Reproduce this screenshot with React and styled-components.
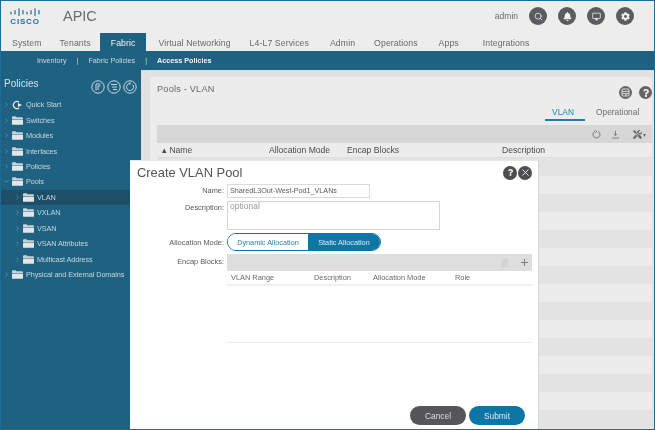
import React from 'react';
import styled, { createGlobalStyle } from 'styled-components';
import { FiChevronRight, FiChevronDown, FiSearch, FiPlus, FiX } from 'react-icons/fi';
import { FaBell, FaCog, FaQuestion, FaTools, FaTrashAlt } from 'react-icons/fa';
import { MdOutlineDesktopWindows } from 'react-icons/md';

const Global = createGlobalStyle`
  html, body { margin: 0; padding: 0; background: #fff; }
  * { box-sizing: border-box; }
`;

// the reference is a soft, upscaled capture, hence the slight blur
const Page = styled.div`
  position: relative;
  width: 655px;
  height: 430px;
  overflow: hidden;
  display: flex;
  flex-direction: column;
  border: 1px solid #1b6c9b;
  background: #ececec;
  color: #58585a;
  font-family: "Liberation Sans", Arial, sans-serif;
  filter: blur(0.3px);
`;

const Header = styled.header`
  height: 32px;
  flex: none;
  display: flex;
  align-items: center;
  padding: 0 20px 2px 8px;
  background: #ededed;
`;

const Logo = styled.div`
  width: 32px;
  display: flex;
  flex-direction: column;
  align-items: center;
  gap: 2px;
  color: #1f6f98;
`;

const LogoWord = styled.span`
  font-size: 8px;
  line-height: 7px;
  font-weight: 700;
  letter-spacing: 0.8px;
`;

const AppName = styled.div`
  margin-left: 22px;
  font-size: 14.5px;
  color: #6c6c6e;
`;

const User = styled.div`
  margin-left: auto;
  margin-right: 11px;
  font-size: 8.5px;
  color: #6a6a6a;
`;

const HeaderIcons = styled.div`
  display: flex;
  gap: 11px;
`;

const RoundIcon = styled.div`
  width: ${p => p.$size || 18}px;
  height: ${p => p.$size || 18}px;
  border-radius: 50%;
  display: flex;
  align-items: center;
  justify-content: center;
  background: ${p => p.$bg || '#5c5c5e'};
  color: #f0f0f0;
  font-size: ${p => p.$font || 9}px;
`;

const Tabs = styled.nav`
  height: 18px;
  flex: none;
  display: flex;
  padding-left: 2px;
  background: #ededed;
`;

const Tab = styled.div`
  margin-left: ${p => p.$ml || 0}px;
  padding: 3px ${p => (p.$active ? 11 : 9)}px 0;
  font-size: 8.7px;
  line-height: 14px;
  letter-spacing: 0.1px;
  white-space: nowrap;
  color: ${p => (p.$active ? '#f2f2f2' : '#68686a')};
  background: ${p => (p.$active ? '#1f6181' : 'transparent')};
`;

const SubNav = styled.div`
  height: 19px;
  flex: none;
  display: flex;
  align-items: center;
  padding-left: 36px;
  gap: 10px;
  font-size: 7.2px;
  color: #c9d8e0;
  background: #1f6181;
`;

const SubLink = styled.span`
  font-weight: ${p => (p.$active ? 700 : 400)};
  color: ${p => (p.$active ? '#f4f7f9' : '#c9d8e0')};
`;

const Body = styled.div`
  flex: 1;
  min-height: 0;
  display: flex;
`;

const Sidebar = styled.aside`
  width: 140px;
  flex: none;
  background: #1f6181;
  color: #c5d5dd;
`;

const SideHead = styled.div`
  height: 27px;
  display: flex;
  align-items: center;
  justify-content: space-between;
  padding: 0 4px 0 3px;
  font-size: 10px;
  color: #d4e0e6;
`;

const SideTools = styled.div`
  display: flex;
  gap: 2px;
  margin-top: 7px;
`;

const Row = styled.div`
  height: 15.45px;
  display: flex;
  align-items: center;
  padding-left: ${p => (p.$nested ? 14 : 3)}px;
  gap: 3px;
  font-size: 7.3px;
  letter-spacing: -0.09px;
  white-space: nowrap;
  background: ${p => (p.$active ? '#1d4f69' : 'transparent')};
  svg { flex: none; }
`;

const Chevron = styled.span`
  width: 5px;
  display: flex;
  justify-content: center;
  font-size: 7px;
  color: #7ea3b5;
`;

const Main = styled.main`
  flex: 1;
  min-width: 0;
  padding: 6px 2px 0 9px;
  background: #e1e1e1;
  border-top: 1px solid #dcdcdc;
`;

const Panel = styled.section`
  height: 100%;
  padding: 0 0 0 7px;
  background: #ececec;
`;

const PanelHead = styled.div`
  height: 29px;
  display: flex;
  align-items: center;
  justify-content: space-between;
`;

const PanelTitle = styled.div`
  padding-bottom: 5px;
  font-size: 9.2px;
  letter-spacing: 0.2px;
  color: #69696b;
`;

const PanelTools = styled.div`
  display: flex;
  gap: 7px;
  margin-top: 2px;
`;

const ViewTabs = styled.div`
  height: 13px;
  display: flex;
  justify-content: flex-end;
  margin-right: 13px;
  gap: 11px;
  font-size: 8.4px;
`;

const ViewTab = styled.div`
  width: ${p => p.$w}px;
  padding-right: ${p => (p.$active ? 4 : 0)}px;
  text-align: center;
  height: 15px;
  line-height: 13px;
  white-space: nowrap;
  color: ${p => (p.$active ? '#1e7ea8' : '#6d6d6f')};
  border-bottom: 2px solid ${p => (p.$active ? '#1e7ea8' : 'transparent')};
`;

const GridBar = styled.div`
  height: 18px;
  margin-top: 6px;
  display: flex;
  align-items: center;
  justify-content: flex-end;
  padding-right: 6px;
  background: #d7d7d7;
  color: #6e6e72;
  font-size: 9px;
`;

const GridTool = styled.span`
  display: flex;
  align-items: center;
  margin-left: ${p => p.$ml || 0}px;
`;

const Caret = styled.span`
  font-size: 6px;
  margin-left: 1px;
`;

const GridHead = styled.div`
  height: 15px;
  display: grid;
  grid-template-columns: 107px 78px 155px 1fr;
  align-items: center;
  padding-left: 5px;
  font-size: 8.6px;
  color: #4c4c4e;
  border-bottom: 1px solid #dedede;
`;

const GridRow = styled.div`
  height: 18px;
  background: ${p => (p.$dark ? '#e3e3e3' : '#ececec')};
`;

const Dialog = styled.div`
  position: absolute;
  left: 129px;
  top: 159px;
  width: 409px;
  height: 270px;
  padding: 0 6px 0 7px;
  display: flex;
  flex-direction: column;
  background: #fff;
  border-right: 1px solid #d6d6d6;
  border-top: 1px solid #e6e6e6;
`;

const DialogHead = styled.div`
  height: 23px;
  flex: none;
  display: flex;
  align-items: center;
  justify-content: space-between;
`;

const DialogTitle = styled.h2`
  margin: 0;
  font-size: 12.9px;
  font-weight: 400;
  color: #545456;
`;

const DialogTools = styled.div`
  display: flex;
  gap: 1px;
`;

const Form = styled.div`
  display: grid;
  grid-template-columns: 87px 1fr;
  column-gap: 3px;
  align-content: start;
`;

const Label = styled.label`
  text-align: right;
  font-size: 7.4px;
  line-height: 12px;
  color: #58585a;
  padding-top: ${p => p.$top || 1}px;
`;

const Field = styled.div`
  margin-bottom: ${p => p.$gap ?? 3}px;
`;

const NameInput = styled.div`
  width: 143px;
  height: 14px;
  padding-left: 2px;
  font-size: 7.2px;
  line-height: 12px;
  color: #5a5a5c;
  border: 1px solid #dadada;
`;

const TextArea = styled.div`
  width: 213px;
  height: 29px;
  padding-left: 2px;
  font-size: 8.5px;
  line-height: 9px;
  color: #9a9a9c;
  border: 1px solid #d6d6d6;
`;

const Toggle = styled.div`
  display: flex;
  width: 154px;
  height: 18px;
  border-radius: 9px;
  overflow: hidden;
  border: 1px solid #0f75a5;
  font-size: 7.3px;
`;

const ToggleOption = styled.div`
  flex: ${p => p.$flex};
  display: flex;
  align-items: center;
  justify-content: center;
  color: ${p => (p.$on ? '#dcecf4' : '#2a82ab')};
  background: ${p => (p.$on ? '#0f75a5' : '#fff')};
`;

const BlockBar = styled.div`
  height: 17px;
  width: 305px;
  display: flex;
  align-items: center;
  justify-content: flex-end;
  gap: 10px;
  padding-right: 2px;
  background: #dedede;
  font-size: 11px;
  color: #77777a;
`;

const Trash = styled(FaTrashAlt)`
  font-size: 8px;
  color: #cfcfcf;
`;

const BlockHead = styled.div`
  width: 305px;
  height: 15px;
  display: grid;
  grid-template-columns: 83px 59px 82px 1fr;
  align-items: center;
  padding-left: 4px;
  font-size: 7.4px;
  color: #69696b;
  border-bottom: 2px solid #efefef;
`;

const BlockBody = styled.div`
  width: 305px;
  height: 57px;
  border-bottom: 1px solid #ececec;
`;

const Footer = styled.div`
  margin-top: auto;
  height: 22px;
  margin-bottom: 2px;
  display: flex;
  justify-content: flex-end;
  gap: 3px;
  padding-right: 7px;
`;

const Button = styled.div`
  width: 56px;
  height: 19px;
  border-radius: 10px;
  display: flex;
  align-items: center;
  justify-content: center;
  font-size: 8.4px;
  color: ${p => (p.$primary ? '#d8e9f2' : '#dcdcdc')};
  background: ${p => (p.$primary ? '#0f75a5' : '#565658')};
`;

const CiscoBars = () => (
  <svg width="31" height="8" viewBox="0 0 31 8" fill="none" stroke="currentColor" strokeWidth="1.2" strokeLinecap="round">
    {[[1, 4, 6], [5, 2.5, 6], [9, 0.8, 7.4], [13, 2.5, 6], [17, 4, 6], [21, 2.5, 6], [25, 0.8, 7.4], [29, 2.5, 6]].map(([x, y1, y2]) => (
      <line key={x} x1={x} x2={x} y1={y1} y2={y2} />
    ))}
  </svg>
);

const SideGlyph = ({ d }) => (
  <svg width="14" height="14" viewBox="0 0 14 14" fill="none" stroke="#dfe7eb" strokeWidth="0.9">
    <circle cx="7" cy="7" r="6.2" />
    <path d={d} />
  </svg>
);

const QuickIcon = () => (
  <svg width="11" height="10" viewBox="0 0 11 10" fill="none" stroke="#eef1f3" strokeWidth="1.2">
    <path d="M7 2 A3.6 3.6 0 1 0 7 8" />
    <path d="M6 3 L10 5 L6 7 Z" fill="#eef1f3" stroke="none" />
  </svg>
);

// the tree folders have a light lip, a dark seam and a light body
const FolderIcon = () => (
  <svg width="11" height="9" viewBox="0 0 11 9">
    <path d="M0 1.2C0 .6.4.3 1 .3h2.6l.9 1H10c.6 0 1 .3 1 .9V3H0z" fill="#c9d2d7" />
    <rect y="3.6" width="11" height="5.2" rx="0.6" fill="#e3e6e8" />
  </svg>
);

const PanelGlyph = () => (
  <svg width="9" height="9" viewBox="0 0 9 9" fill="none" stroke="#e8e8e8" strokeWidth="0.9">
    <rect x="1" y="1" width="7" height="7" rx="1" />
    <path d="M1 3.4h7M1 5.6h7M5 5.6V8" />
  </svg>
);

const RefreshIcon = () => (
  <svg width="9" height="9" viewBox="0 0 9 9" fill="none" stroke="currentColor" strokeWidth="0.9">
    <path d="M6.2 1.4A3.5 3.5 0 1 1 2.8 1.4" />
    <path d="M3.4 0.4l1.4 1.2-1.4 .9" />
  </svg>
);

const DownloadIcon = () => (
  <svg width="9" height="9" viewBox="0 0 9 9" fill="none" stroke="currentColor" strokeWidth="0.8">
    <path d="M4.5 .8v4.6M2.8 3.9l1.7 1.6 1.7-1.6M.8 8h7.4" />
  </svg>
);

const tabs = [
  { name: 'System' },
  { name: 'Tenants' },
  { name: 'Fabric', active: true },
  { name: 'Virtual Networking', ml: 3 },
  { name: 'L4-L7 Services', ml: 1 },
  { name: 'Admin', ml: 3 },
  { name: 'Operations', ml: 1 },
  { name: 'Apps', ml: 3 },
  { name: 'Integrations', ml: 6 },
];

const tree = [
  { name: 'Quick Start', quick: true },
  { name: 'Switches' },
  { name: 'Modules' },
  { name: 'Interfaces' },
  { name: 'Policies' },
  { name: 'Pools', open: true },
  { name: 'VLAN', nested: true, active: true },
  { name: 'VXLAN', nested: true },
  { name: 'VSAN', nested: true },
  { name: 'VSAN Attributes', nested: true },
  { name: 'Multicast Address', nested: true },
  { name: 'Physical and External Domains' },
];

export default function App() {
  return (
    <Page>
      <Global />
      <Header>
        <Logo>
          <CiscoBars />
          <LogoWord>CISCO</LogoWord>
        </Logo>
        <AppName>APIC</AppName>
        <User>admin</User>
        <HeaderIcons>
          <RoundIcon><FiSearch /></RoundIcon>
          <RoundIcon><FaBell /></RoundIcon>
          <RoundIcon><MdOutlineDesktopWindows /></RoundIcon>
          <RoundIcon><FaCog /></RoundIcon>
        </HeaderIcons>
      </Header>
      <Tabs>
        {tabs.map(tab => (
          <Tab key={tab.name} $active={tab.active} $ml={tab.ml}>{tab.name}</Tab>
        ))}
      </Tabs>
      <SubNav>
        <SubLink>Inventory</SubLink>|<SubLink>Fabric Policies</SubLink>|<SubLink $active>Access Policies</SubLink>
      </SubNav>
      <Body>
        <Sidebar>
          <SideHead>
            Policies
            <SideTools>
              <SideGlyph d="M5 10.5V4h4.5M7 10V6h2.5" />
              <SideGlyph d="M4 4.5h6M5 7h5M6 9.5h4" />
              <SideGlyph d="M9.6 4.6A3.5 3.5 0 1 1 7 3.5M7 2.2v2.6" />
            </SideTools>
          </SideHead>
          {tree.map(item => (
            <Row key={item.name} $nested={item.nested} $active={item.active}>
              <Chevron>{item.open ? <FiChevronDown /> : <FiChevronRight />}</Chevron>
              {item.quick ? <QuickIcon /> : <FolderIcon />}
              {item.name}
            </Row>
          ))}
        </Sidebar>
        <Main>
          <Panel>
            <PanelHead>
              <PanelTitle>Pools - VLAN</PanelTitle>
              <PanelTools>
                <RoundIcon $size={13} $bg="#646466"><PanelGlyph /></RoundIcon>
                <RoundIcon $size={13} $bg="#646466" $font={8}><FaQuestion /></RoundIcon>
              </PanelTools>
            </PanelHead>
            <ViewTabs>
              <ViewTab $active $w={40}>VLAN</ViewTab>
              <ViewTab $w={43}>Operational</ViewTab>
            </ViewTabs>
            <GridBar>
              <GridTool><RefreshIcon /></GridTool>
              <GridTool $ml={10}><DownloadIcon /></GridTool>
              <GridTool $ml={13}><FaTools /><Caret>▾</Caret></GridTool>
            </GridBar>
            <GridHead>
              <span>▴ Name</span>
              <span>Allocation Mode</span>
              <span>Encap Blocks</span>
              <span>Description</span>
            </GridHead>
            {Array.from({ length: 15 }, (_, i) => <GridRow key={i} $dark={i % 2 === 0} />)}
          </Panel>
        </Main>
      </Body>

      <Dialog>
        <DialogHead>
          <DialogTitle>Create VLAN Pool</DialogTitle>
          <DialogTools>
            <RoundIcon $size={14} $bg="#4e4e50" $font={7}><FaQuestion /></RoundIcon>
            <RoundIcon $size={14} $bg="#4e4e50" $font={11}><FiX /></RoundIcon>
          </DialogTools>
        </DialogHead>
        <Form>
          <Label>Name:</Label>
          <Field><NameInput>SharedL3Out-West-Pod1_VLANs</NameInput></Field>
          <Label>Description:</Label>
          <Field><TextArea>optional</TextArea></Field>
          <Label $top={4}>Allocation Mode:</Label>
          <Field>
            <Toggle>
              <ToggleOption $flex="81">Dynamic Allocation</ToggleOption>
              <ToggleOption $flex="73" $on>Static Allocation</ToggleOption>
            </Toggle>
          </Field>
          <Label $top={2}>Encap Blocks:</Label>
          <Field $gap={0}>
            <BlockBar>
              <Trash />
              <FiPlus />
            </BlockBar>
            <BlockHead>
              <span>VLAN Range</span>
              <span>Description</span>
              <span>Allocation Mode</span>
              <span>Role</span>
            </BlockHead>
            <BlockBody />
          </Field>
        </Form>
        <Footer>
          <Button>Cancel</Button>
          <Button $primary>Submit</Button>
        </Footer>
      </Dialog>
    </Page>
  );
}
